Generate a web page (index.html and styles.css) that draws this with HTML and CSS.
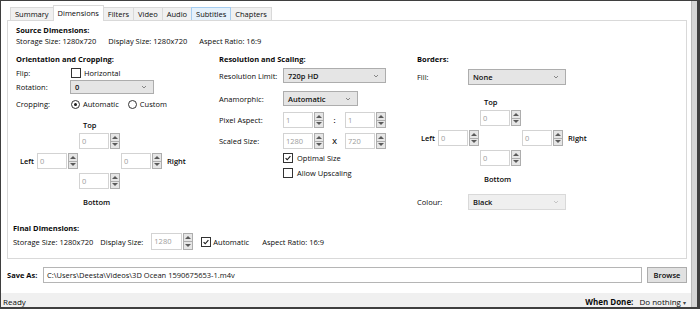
FILE: index.html
```html
<!DOCTYPE html>
<html lang="en">
<head>
    <meta charset="UTF-8">
    <meta name="viewport" content="width=device-width, initial-scale=1.0">
    <title>Dimensions</title>
    <link rel="stylesheet" href="styles.css">
</head>
<body>
    <div class="window">
        <div class="main">
            <!-- Tab strip -->
            <div class="tabs">
                <span class="tab">Summary</span>
                <span class="tab active">Dimensions</span>
                <span class="tab">Filters</span>
                <span class="tab">Video</span>
                <span class="tab">Audio</span>
                <span class="tab hover">Subtitles</span>
                <span class="tab">Chapters</span>
            </div>

            <div class="panel">
                <div class="source">
                    <h3>Source Dimensions:</h3>
                    <div class="info-row">
                        <span>Storage Size: 1280x720</span>
                        <span>Display Size: 1280x720</span>
                        <span>Aspect Ratio: 16:9</span>
                    </div>
                </div>

                <div class="columns">
                    <!-- Orientation and Cropping -->
                    <div class="col orient">
                        <h3>Orientation and Cropping:</h3>
                        <div class="field flip">
                            <span class="lbl">Flip:</span>
                            <span class="check"></span>
                            <span class="opt">Horizontal</span>
                        </div>
                        <div class="field rotation">
                            <span class="lbl">Rotation:</span>
                            <span class="combo w-rot"><span>0</span><svg class="chev" viewBox="0 0 6 4"><path d="M1 1l2 2 2-2"/></svg></span>
                        </div>
                        <div class="field cropping">
                            <span class="lbl">Cropping:</span>
                            <span class="radio on"></span>
                            <span class="opt">Automatic</span>
                            <span class="radio custom"></span>
                            <span class="opt">Custom</span>
                        </div>
                        <div class="cross crop-cross">
                            <span class="cl c-top">Top</span>
                            <span class="spin s-top"><span class="spin-val">0</span><span class="spin-btns"><i class="up"></i><i class="down"></i></span></span>
                            <span class="cl c-left">Left</span>
                            <span class="spin s-left"><span class="spin-val">0</span><span class="spin-btns"><i class="up"></i><i class="down"></i></span></span>
                            <span class="spin s-right"><span class="spin-val">0</span><span class="spin-btns"><i class="up"></i><i class="down"></i></span></span>
                            <span class="cl c-right">Right</span>
                            <span class="spin s-bottom"><span class="spin-val">0</span><span class="spin-btns"><i class="up"></i><i class="down"></i></span></span>
                            <span class="cl c-bottom">Bottom</span>
                        </div>
                    </div>

                    <!-- Resolution and Scaling -->
                    <div class="col scaling">
                        <h3>Resolution and Scaling:</h3>
                        <div class="field res-limit">
                            <span class="lbl">Resolution Limit:</span>
                            <span class="combo w-res"><span>720p HD</span><svg class="chev" viewBox="0 0 6 4"><path d="M1 1l2 2 2-2"/></svg></span>
                        </div>
                        <div class="field anamorphic">
                            <span class="lbl">Anamorphic:</span>
                            <span class="combo w-ana"><span>Automatic</span><svg class="chev" viewBox="0 0 6 4"><path d="M1 1l2 2 2-2"/></svg></span>
                        </div>
                        <div class="field pixel">
                            <span class="lbl">Pixel Aspect:</span>
                            <span class="spin"><span class="spin-val">1</span><span class="spin-btns"><i class="up"></i><i class="down"></i></span></span>
                            <span class="sep">:</span>
                            <span class="spin"><span class="spin-val">1</span><span class="spin-btns"><i class="up"></i><i class="down"></i></span></span>
                        </div>
                        <div class="field scaled">
                            <span class="lbl">Scaled Size:</span>
                            <span class="spin"><span class="spin-val">1280</span><span class="spin-btns"><i class="up"></i><i class="down"></i></span></span>
                            <span class="sep">X</span>
                            <span class="spin"><span class="spin-val">720</span><span class="spin-btns"><i class="up"></i><i class="down"></i></span></span>
                        </div>
                        <div class="field checkrow optimal">
                            <span class="check on"><svg viewBox="0 0 10 10"><path d="M2 5.2l2 2 4-4.6"/></svg></span>
                            <span class="opt">Optimal Size</span>
                        </div>
                        <div class="field checkrow upscale">
                            <span class="check"></span>
                            <span class="opt">Allow Upscaling</span>
                        </div>
                    </div>

                    <!-- Borders -->
                    <div class="col borders">
                        <h3>Borders:</h3>
                        <div class="field fill">
                            <span class="lbl">Fill:</span>
                            <span class="combo w-fill"><span>None</span><svg class="chev" viewBox="0 0 6 4"><path d="M1 1l2 2 2-2"/></svg></span>
                        </div>
                        <div class="cross border-cross">
                            <span class="cl c-top">Top</span>
                            <span class="spin s-top"><span class="spin-val">0</span><span class="spin-btns"><i class="up"></i><i class="down"></i></span></span>
                            <span class="cl c-left">Left</span>
                            <span class="spin s-left"><span class="spin-val">0</span><span class="spin-btns"><i class="up"></i><i class="down"></i></span></span>
                            <span class="spin s-right"><span class="spin-val">0</span><span class="spin-btns"><i class="up"></i><i class="down"></i></span></span>
                            <span class="cl c-right">Right</span>
                            <span class="spin s-bottom"><span class="spin-val">0</span><span class="spin-btns"><i class="up"></i><i class="down"></i></span></span>
                            <span class="cl c-bottom">Bottom</span>
                        </div>
                        <div class="field colour">
                            <span class="lbl">Colour:</span>
                            <span class="combo w-fill disabled"><span>Black</span><svg class="chev" viewBox="0 0 6 4"><path d="M1 1l2 2 2-2"/></svg></span>
                        </div>
                    </div>
                </div>

                <div class="final">
                    <h3>Final Dimensions:</h3>
                    <div class="final-row">
                        <span class="f-storage">Storage Size: 1280x720</span>
                        <span class="f-display">Display Size:</span>
                        <span class="spin f-spin"><span class="spin-val">1280</span><span class="spin-btns"><i class="up"></i><i class="down"></i></span></span>
                        <span class="check on"><svg viewBox="0 0 10 10"><path d="M2 5.2l2 2 4-4.6"/></svg></span>
                        <span class="f-auto">Automatic</span>
                        <span class="f-aspect">Aspect Ratio: 16:9</span>
                    </div>
                </div>
            </div>

            <!-- Destination -->
            <div class="saverow">
                <span class="save-lbl">Save As:</span>
                <span class="path">C:\Users\Deesta\Videos\3D Ocean 1590675653-1.m4v</span>
                <span class="browse">Browse</span>
            </div>

            <div class="status">
                <span class="ready">Ready</span>
                <span class="when"><b>When Done:</b> Do nothing <span class="caret">&#9662;</span></span>
            </div>
        </div>
        <div class="edge"></div>
    </div>
</body>
</html>
```

FILE: styles.css
```css
/* Base */
body {
    margin: 0;
    background-color: #3f3f3f;
    font-family: "Open Sans", "Noto Sans", sans-serif;
    font-size: 7.5px;
    line-height: 10px;
    color: #0a0a0a;
}

h3 {
    margin: 0;
    font-size: 7.5px;
    line-height: 10px;
    font-weight: 700;
}

/* Window frame */
.window {
    display: flex;
    height: 306px;
    margin: 1px 3px 0 1px;
    background-color: #fff;
    overflow: hidden;
}

.main {
    flex: 1;
    display: flex;
    flex-direction: column;
    padding-top: 4px;
    min-width: 0;
}

.edge {
    width: 5px;
    background-color: #d6d6d6;
    border-left: 1px solid #bcbcbc;
}

/* Tabs */
.tabs {
    display: flex;
    align-items: flex-end;
    height: 15px;
    margin-left: 9px;
}

.tab {
    box-sizing: border-box;
    height: 13px;
    line-height: 12px;
    padding: 0 4px;
    border: 1px solid #d9d9d9;
    border-bottom: none;
    background-color: #f0f0f0;
    margin-right: -1px;
}

.tab.active {
    position: relative;
    z-index: 1;
    height: 16px;
    margin-bottom: -1px;
    line-height: 14px;
    background-color: #fff;
    padding: 0 4px;
}

.tab.hover {
    position: relative;
    background-color: #e5f1fb;
    border-color: #a6cdf0;
}

/* Tab panel */
.panel {
    margin: 0 4px 0 6px;
    padding: 4px 8px 8px 8px;
    border: 1px solid #d9d9d9;
}

.info-row {
    display: flex;
    gap: 12px;
    margin-top: 1px;
}

.columns {
    display: grid;
    grid-template-columns: 203px 198px 1fr;
    margin-top: 8px;
    align-items: start;
}

.field {
    display: flex;
    align-items: center;
}

.lbl {
    flex-shrink: 0;
}

.orient .lbl { width: 55px; }
.scaling .lbl { width: 64px; }
.borders .lbl { width: 51px; }

.opt {
    margin-left: 3px;
}

.flip { margin-top: 4px; height: 10px; }
.rotation { margin-top: 2px; }
.rotation .combo { margin-left: -1px; }
.cropping { margin-top: 5px; height: 10px; }
.cropping .radio.custom { margin-left: 9px; }
.cropping .opt { margin-left: 3px; }

.res-limit { margin-top: 4px; }
.anamorphic { margin-top: 8px; }
.pixel { margin-top: 6px; }
.scaled { margin-top: 5px; }
.optimal { margin-top: 4px; }
.upscale { margin-top: 5px; }
.checkrow { padding-left: 64px; height: 10px; }
.checkrow .opt { margin-left: 4px; }

.sep {
    width: 21px;
    text-align: center;
    font-weight: 600;
}

.fill { margin-top: 5px; }
.colour { margin-top: 10px; }

/* Combo boxes */
.combo {
    box-sizing: border-box;
    display: flex;
    align-items: center;
    justify-content: space-between;
    border: 1px solid #adadad;
    background-color: #e5e5e5;
    padding: 0 6px 0 4px;
    font-weight: 600;
    color: #111;
}

.combo.disabled {
    background-color: #efefef;
    border-color: #d9d9d9;
}

.combo.disabled .chev {
    stroke: #c0c0c0;
}

.w-rot { width: 84px; height: 14px; }
.w-res { width: 103px; height: 15px; }
.w-ana { width: 75px; height: 15px; }
.w-fill { width: 98px; height: 16px; }

.chev {
    width: 6px;
    height: 4px;
    fill: none;
    stroke: #7a7a7a;
    stroke-width: 0.9;
}

/* Check boxes and radio buttons */
.check {
    box-sizing: border-box;
    display: inline-flex;
    width: 10px;
    height: 10px;
    border: 1px solid #333;
    background-color: #fff;
    flex-shrink: 0;
}

.check svg {
    width: 8px;
    height: 8px;
    fill: none;
    stroke: #1a1a1a;
    stroke-width: 1.4;
}

.radio {
    box-sizing: border-box;
    display: inline-flex;
    align-items: center;
    justify-content: center;
    width: 9px;
    height: 9px;
    border: 1px solid #333;
    border-radius: 50%;
    flex-shrink: 0;
}

.radio.on::before {
    content: "";
    width: 3px;
    height: 3px;
    border-radius: 50%;
    background-color: #1a1a1a;
}

/* Spin boxes */
.spin {
    display: flex;
    gap: 1px;
    width: 41px;
    height: 16px;
    flex-shrink: 0;
}

.spin-val {
    box-sizing: border-box;
    flex: 1;
    border: 1px solid #d3d3d3;
    color: #9c9c9c;
    padding-left: 2px;
    line-height: 14px;
}

.spin-btns {
    display: flex;
    flex-direction: column;
    width: 10px;
}

.spin-btns i {
    box-sizing: border-box;
    flex: 1;
    display: flex;
    align-items: center;
    justify-content: center;
    border: 1px solid #adadad;
    background-color: #e6e6e6;
}

.spin-btns i + i {
    border-top: none;
}

.spin-btns i.up::before {
    content: "";
    border-left: 3px solid transparent;
    border-right: 3px solid transparent;
    border-bottom: 3px solid #5a5a5a;
}

.spin-btns i.down::before {
    content: "";
    border-left: 3px solid transparent;
    border-right: 3px solid transparent;
    border-top: 3px solid #5a5a5a;
}

/* Top / Left / Right / Bottom crosses */
.cross {
    display: grid;
    grid-template-columns: 21px 42px 42px 42px auto;
    grid-template-rows: 9px 16px 16px 16px 14px;
    row-gap: 4px;
}

.crop-cross { margin-top: 11px; }
.border-cross { margin-top: 12px; }

.cl {
    font-weight: 600;
    line-height: 10px;
}

.c-top { grid-column: 3; grid-row: 1; padding-left: 4px; }
.s-top { grid-column: 3; grid-row: 2; }
.c-left { grid-column: 1; grid-row: 3; text-align: right; padding-right: 3px; align-self: center; }
.s-left { grid-column: 2; grid-row: 3; }
.s-right { grid-column: 4; grid-row: 3; }
.c-right { grid-column: 5; grid-row: 3; padding-left: 4px; align-self: center; }
.s-bottom { grid-column: 3; grid-row: 4; }
.c-bottom { grid-column: 3; grid-row: 5; padding-left: 4px; align-self: end; }

/* Final dimensions */
.final {
    margin-top: 13px;
    margin-left: -3px;
}

.final-row {
    display: flex;
    align-items: center;
    height: 17px;
}

.f-display { margin-left: 7px; }
.f-spin { margin-left: 8px; width: 42px; height: 17px; }
.final-row .check { margin-left: 8px; }
.f-auto { margin-left: 2px; }
.f-aspect { margin-left: 13px; }

/* Save As row */
.saverow {
    display: flex;
    align-items: center;
    height: 16px;
    margin-top: 8px;
    padding: 0 4px 0 6px;
}

.save-lbl {
    width: 36px;
    font-weight: 700;
}

.path {
    box-sizing: border-box;
    flex: 1;
    height: 16px;
    line-height: 14px;
    padding-left: 3px;
    border: 1px solid #b5b5b5;
    color: #111;
}

.browse {
    box-sizing: border-box;
    width: 40px;
    height: 16px;
    margin-left: 5px;
    line-height: 14px;
    text-align: center;
    border: 1px solid #adadad;
    background-color: #e1e1e1;
    font-weight: 600;
}

/* Status bar */
.status {
    box-sizing: border-box;
    display: flex;
    justify-content: space-between;
    height: 15px;
    margin-top: 10px;
    padding: 4px 5px 0 2px;
    background-color: #f0f0f0;
    font-size: 8px;
    overflow: hidden;
}

.when b {
    margin-right: 4px;
}

.caret {
    font-size: 6px;
    color: #444;
}
```
